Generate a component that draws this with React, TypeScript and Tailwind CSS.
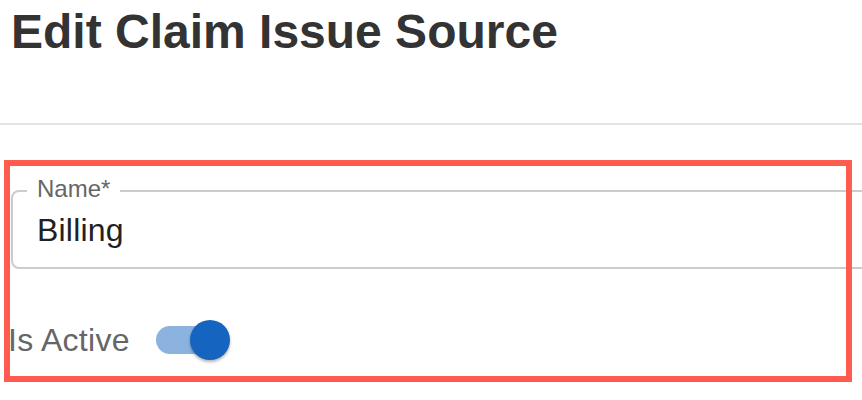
import React from "react";

export default function App() {
  return (
    <div
      className="relative w-[862px] h-[400px] overflow-hidden bg-white"
      style={{ fontFamily: '"Liberation Sans", Arial, Helvetica, sans-serif' }}
    >
      <h1 className="mt-[4px] ml-[11px] text-[48px] font-bold leading-[55px] text-[#333333] whitespace-nowrap">
        Edit Claim Issue Source
      </h1>
      <div className="mt-[64px] h-[2px] w-full bg-[#e3e3e3]" />

      <div className="flex flex-col">
        <div className="relative mt-[65px] ml-[11px] w-[900px] h-[79px] border-2 border-[#cccccc] rounded-[8px] pl-[24px] pt-[22px]">
          <span className="absolute left-[14px] top-[-15px] bg-white px-[10px] text-[24px] leading-[24px] text-[#666666] whitespace-nowrap">
            Name*
          </span>
          <div className="text-[32px] leading-[32px] text-[#212121] tracking-[0.2px]">Billing</div>
        </div>

        <div className="mt-[51px] ml-[8px] flex items-center h-[40px] gap-[26px]">
          <span className="text-[32px] leading-[40px] text-[#666666] whitespace-nowrap tracking-[0.3px]">Is Active</span>
          <div className="relative flex items-center h-[40px] w-[74px]">
            <div className="w-[68px] h-[28px] rounded-full bg-[#8cb3df]" />
            <div className="absolute left-[34px] top-0 w-[40px] h-[40px] rounded-full bg-[#1565c0] shadow-[0_2px_3px_rgba(0,0,0,0.3)]" />
          </div>
        </div>
      </div>

      <div className="absolute left-[4px] top-[160px] w-[848px] h-[222px] border-[6px] border-[#ff5b4f] pointer-events-none" />
    </div>
  );
}
